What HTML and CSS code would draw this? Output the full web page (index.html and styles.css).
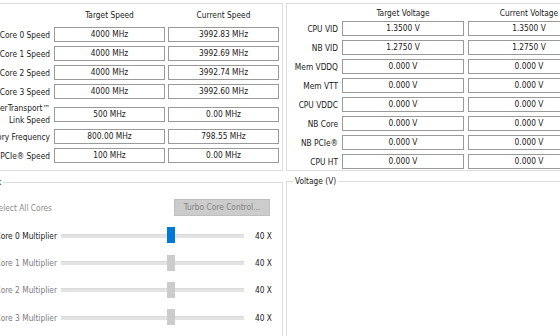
FILE: index.html
```html
<!DOCTYPE html>
<html>
<head>
<meta charset="utf-8">
<link rel="stylesheet" href="styles.css">
</head>
<body>
<div class="window">
  <div class="top">
    <section class="panel speed">
      <div class="grid speed-grid">
        <div></div><div class="hdr">Target Speed</div><div class="hdr">Current Speed</div>
        <div class="lbl">Core 0 Speed</div><div class="val">4000 MHz</div><div class="val">3992.83 MHz</div>
        <div class="lbl">Core 1 Speed</div><div class="val">4000 MHz</div><div class="val">3992.69 MHz</div>
        <div class="lbl">Core 2 Speed</div><div class="val">4000 MHz</div><div class="val">3992.74 MHz</div>
        <div class="lbl">Core 3 Speed</div><div class="val">4000 MHz</div><div class="val">3992.60 MHz</div>
        <div class="lbl two">HyperTransport™<br>Link Speed</div><div class="val">500 MHz</div><div class="val">0.00 MHz</div>
        <div class="lbl">Memory Frequency</div><div class="val">800.00 MHz</div><div class="val">798.55 MHz</div>
        <div class="lbl">NB PCIe® Speed</div><div class="val">100 MHz</div><div class="val">0.00 MHz</div>
      </div>
    </section>
    <section class="panel volt">
      <div class="grid volt-grid">
        <div></div><div class="hdr">Target Voltage</div><div class="hdr">Current Voltage</div>
        <div class="lbl">CPU VID</div><div class="val">1.3500 V</div><div class="val">1.3500 V</div>
        <div class="lbl">NB VID</div><div class="val">1.2750 V</div><div class="val">1.2750 V</div>
        <div class="lbl">Mem VDDQ</div><div class="val">0.000 V</div><div class="val">0.000 V</div>
        <div class="lbl">Mem VTT</div><div class="val">0.000 V</div><div class="val">0.000 V</div>
        <div class="lbl">CPU VDDC</div><div class="val">0.000 V</div><div class="val">0.000 V</div>
        <div class="lbl">NB Core</div><div class="val">0.000 V</div><div class="val">0.000 V</div>
        <div class="lbl">NB PCIe®</div><div class="val">0.000 V</div><div class="val">0.000 V</div>
        <div class="lbl">CPU HT</div><div class="val">0.000 V</div><div class="val">0.000 V</div>
      </div>
    </section>
  </div>
  <div class="bottom">
    <fieldset class="group clock">
      <legend>Clock</legend>
      <div class="select-row">
        <label class="chk"><span class="cbox"></span>Select All Cores</label>
        <button class="turbo" disabled>Turbo Core Control...</button>
      </div>
      <div class="sliders">
        <div class="srow">
          <div class="slbl">Core 0 Multiplier</div>
          <div class="slider"><div class="track"></div><div class="thumb active" style="left:106px"></div></div>
          <div class="sval">40 X</div>
        </div>
        <div class="srow off">
          <div class="slbl">Core 1 Multiplier</div>
          <div class="slider"><div class="track"></div><div class="thumb" style="left:106px"></div></div>
          <div class="sval">40 X</div>
        </div>
        <div class="srow off">
          <div class="slbl">Core 2 Multiplier</div>
          <div class="slider"><div class="track"></div><div class="thumb" style="left:106px"></div></div>
          <div class="sval">40 X</div>
        </div>
        <div class="srow off">
          <div class="slbl">Core 3 Multiplier</div>
          <div class="slider"><div class="track"></div><div class="thumb" style="left:106px"></div></div>
          <div class="sval">40 X</div>
        </div>
      </div>
    </fieldset>
    <fieldset class="group voltage">
      <legend>Voltage (V)</legend>
    </fieldset>
  </div>
</div>
</body>
</html>
```
FILE: styles.css
```css
html, body {
  margin: 0;
  padding: 0;
  width: 560px;
  height: 336px;
  overflow: hidden;
  background: #ffffff;
}
body {
  font-family: "DejaVu Sans Condensed", "DejaVu Sans", sans-serif;
  font-stretch: condensed;
  font-size: 8.3px;
  color: #1a1a1a;
}
.window {
  margin-left: -56px;
  padding-top: 3px;
  width: 720px;
}
.top {
  display: flex;
  gap: 3px;
}
.panel {
  border: 1px solid #dcdcdc;
  background: #ffffff;
}
.speed {
  padding: 0 3px 7px 5px;
}
.volt {
  flex: 1;
  padding: 0;
}
.grid {
  display: grid;
}
.speed-grid {
  grid-template-columns: 101px 111px 111px;
  grid-template-rows: 19px 15px 15px 15px 15px 22px 15px 15px;
  column-gap: 3px;
  row-gap: 4px;
}
.volt-grid {
  grid-template-columns: 51px 122px 122px;
  grid-template-rows: 13px repeat(8, 15px);
  column-gap: 4px;
  row-gap: 4px;
}
.hdr {
  text-align: center;
  line-height: 11px;
  white-space: nowrap;
}
.speed-grid .hdr {
  padding-top: 6px;
}
.volt-grid .hdr {
  padding-top: 4px;
}
.lbl {
  display: flex;
  align-items: center;
  justify-content: flex-end;
  text-align: right;
  white-space: nowrap;
  line-height: 12px;
}
.speed-grid .lbl {
  padding-right: 1px;
}
.val {
  border: 1px solid #9a9a9a;
  text-align: center;
  line-height: 13px;
  white-space: nowrap;
  background: #ffffff;
}
.speed-grid .two + .val,
.speed-grid .two + .val + .val {
  align-self: center;
  height: 13px;
}
.bottom {
  display: flex;
  align-items: flex-start;
  gap: 3px;
}
.group {
  margin: 0;
  min-width: 0;
  border: 1px solid #dcdcdc;
  height: 200px;
  box-sizing: border-box;
}
.group legend {
  padding: 0 2px;
  line-height: 11px;
  font-size: 8.3px;
}
.clock {
  margin-top: 6px;
  margin-left: 28px;
  width: 311px;
  padding: 11px 12px 0 6px;
}
.voltage {
  margin-top: 5px;
  flex: 1;
  padding: 0 0 0 6px;
}
.select-row {
  display: flex;
  justify-content: space-between;
  align-items: center;
  height: 17px;
}
.chk {
  width: 78px;
  box-sizing: border-box;
  padding-right: 5px;
  display: flex;
  justify-content: flex-end;
  align-items: center;
  gap: 4px;
  color: #8a8a8a;
  white-space: nowrap;
}
.cbox {
  width: 11px;
  height: 11px;
  border: 1px solid #bcbcbc;
  box-sizing: border-box;
  flex: none;
}
.turbo {
  width: 96px;
  height: 17px;
  margin: 0;
  padding: 0;
  background: #cccccc;
  border: 1px solid #bfbfbf;
  color: #838383;
  font-family: inherit;
  font-stretch: condensed;
  font-size: 8.3px;
  line-height: 15px;
}
.sliders {
  margin-top: 6px;
}
.srow {
  display: grid;
  grid-template-columns: 78px 183px 1fr;
  column-gap: 4px;
  height: 27.4px;
  align-items: center;
}
.slbl {
  text-align: right;
  white-space: nowrap;
  color: #1a1a1a;
}
.srow.off .slbl {
  color: #7c7c7c;
}
.slider {
  position: relative;
  height: 27px;
  display: flex;
  align-items: center;
}
.track {
  width: 100%;
  height: 4px;
  background: #e3e3e3;
  border-top: 1px solid #dadada;
  box-sizing: border-box;
}
.thumb {
  position: absolute;
  top: 5px;
  width: 8px;
  height: 16px;
  background: #cccccc;
}
.thumb.active {
  background: #0078d7;
}
.sval {
  padding-left: 7px;
  white-space: nowrap;
  color: #1a1a1a;
}
```
